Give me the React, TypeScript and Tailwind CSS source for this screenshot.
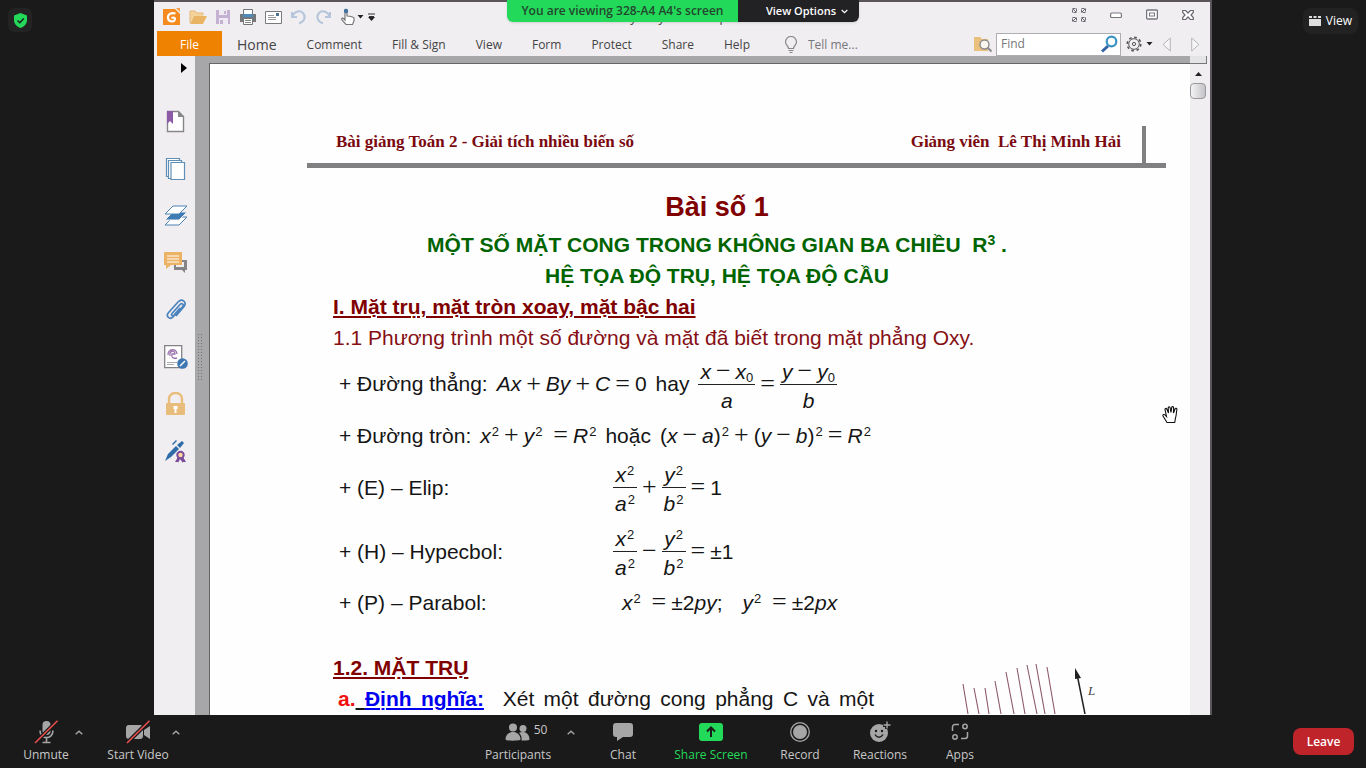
import type { ReactNode } from "react";

function Sup({ children }: { children: ReactNode }) {
  return <sup className="pl-px text-[13px] not-italic">{children}</sup>;
}

function Sub({ children }: { children: ReactNode }) {
  return <sub className="text-[13px] not-italic">{children}</sub>;
}

function Op({ children }: { children: ReactNode }) {
  return <span className="px-[5px] font-['Liberation_Serif',serif] text-[26px] leading-6 not-italic">{children}</span>;
}

function Num({ children }: { children: ReactNode }) {
  return <span className="not-italic">{children}</span>;
}

function Frac({ top, bottom }: { top: ReactNode; bottom: ReactNode }) {
  return (
    <span className="inline-flex flex-col items-stretch text-center leading-6">
      <span className="border-b border-[#222] px-[2px] pt-1">{top}</span>
      <span className="px-[2px] pt-1">{bottom}</span>
    </span>
  );
}

function Formula({ children, className = "" }: { children: ReactNode; className?: string }) {
  return <span className={`flex items-center whitespace-pre italic ${className}`}>{children}</span>;
}

function Caret({ className = "" }: { className?: string }) {
  return (
    <svg className={className} width="7" height="4" viewBox="0 0 7 4">
      <path d="M.5 0h6L3.500 3.500z" fill="#222" />
    </svg>
  );
}

function QuickAccess() {
  return (
    <div className="flex items-center gap-2 pl-[9px]">
      <button aria-label="Foxit Reader">
        <svg width="18" height="18" viewBox="0 0 18 18">
          <path d="M0 1h12l5 5v11H0z" fill="#f58a1f" />
          <path d="M13 0h4v4z" fill="#f5a04a" />
          <path d="M12.500 5.500C8 4 4.500 6.500 5 10c.5 4 6 4.500 7 1.500.3-1.500-1-2.500-3.500-1.500" fill="none" stroke="#fff" strokeWidth="2.200" />
        </svg>
      </button>
      <button aria-label="Open">
        <svg width="18" height="18" viewBox="0 0 18 18">
          <path d="M1 15V3h5l2 2h6v3H5z" fill="#f3d39b" />
          <path d="M1 16 5 8h13l-4 8z" fill="#e9b565" />
          <path d="M1 15V3h5l2 2h6v2" fill="none" stroke="#e5b878" />
        </svg>
      </button>
      <button aria-label="Save">
        <svg width="16" height="18" viewBox="0 0 16 18">
          <path d="M1 2h14v14H1z" fill="#c5b2d2" />
          <path d="M4 2h8v5H4zM4 10h9v6H4z" fill="#f0eaf4" />
          <path d="M9 3h2v3H9zM5 12h3v4H5z" fill="#c5b2d2" />
        </svg>
      </button>
      <button aria-label="Print">
        <svg width="18" height="18" viewBox="0 0 18 18">
          <path d="M1 6h16v8H1z" fill="#747679" />
          <path d="M4.500 1.500h9v6h-9zM4.500 10.500h9v6h-9z" fill="#fff" stroke="#747679" />
          <path d="M4 6h10v3H4z" fill="#4f8abd" />
          <path d="M6 12.500h6M6 14.500h6" stroke="#888" />
        </svg>
      </button>
      <button aria-label="Email">
        <svg width="17" height="18" viewBox="0 0 17 18">
          <path d="M.5 3.500h16v12H.5z" fill="#fff" stroke="#77797c" />
          <path d="M3 7.500h6M3 9.500h8M3 11.500h8" stroke="#999" />
          <path d="M11 5h3v3h-3z" fill="#4f718e" />
        </svg>
      </button>
      <button aria-label="Undo">
        <svg width="17" height="18" viewBox="0 0 17 18" fill="none" stroke="#b5c5db" strokeWidth="2">
          <path d="M2 4v5h5M2.500 8C5 3 10 2 13 5c3.500 4 1 9-4 10.500" />
        </svg>
      </button>
      <button aria-label="Redo">
        <svg width="17" height="18" viewBox="0 0 17 18" fill="none" stroke="#b5c5db" strokeWidth="2">
          <path d="M15 4v5h-5M14.500 8C12 3 7 2 4 5c-3.500 4-1 9 4 10.500" />
        </svg>
      </button>
      <button aria-label="Hand tool" className="flex items-center gap-px">
        <svg width="16" height="18" viewBox="0 0 16 18">
          <path d="M5 10V2.500c0-1.500 2-1.500 2 0V8c3 .3 6 .7 7 2v3l-1.500 3.500H6L2 12c-1-1.500.5-2.500 1.500-1.500L5 12z" fill="#fff" stroke="#777" strokeWidth="1.200" />
          <circle cx="6" cy="3" r="2.200" fill="#42729e" />
        </svg>
        <Caret />
      </button>
      <button aria-label="Customize toolbar" className="-ml-1">
        <svg width="7" height="8" viewBox="0 0 7 8">
          <path d="M0 1h7M1 3.500h5" stroke="#333" />
          <path d="M0 4h7L3.500 8z" fill="#222" />
        </svg>
      </button>
    </div>
  );
}

function WindowControls() {
  return (
    <div className="flex items-center gap-6 pr-4 pb-1 text-[#6c6c74]">
      <button aria-label="Full screen">
        <svg width="14" height="14" viewBox="0 0 14 14" fill="none" stroke="#696971">
          <path d="M.5.500h4v4h-4zM9.500.500h4v4h-4zM.5 9.500h4v4h-4zM9.500 9.500h4v4h-4z" strokeDasharray="3 1" />
          <path d="m1 1 3 3M13 1l-3 3M1 13l3-3m9 3-3-3" />
        </svg>
      </button>
      <button aria-label="Minimize">
        <svg width="12" height="14" viewBox="0 0 12 14">
          <rect x=".6" y="5" width="10.800" height="4.500" rx="1" fill="#fff" stroke="#777780" strokeWidth="1.200" />
        </svg>
      </button>
      <button aria-label="Maximize">
        <svg width="12" height="14" viewBox="0 0 12 14">
          <rect x=".6" y="2" width="10.800" height="9" rx="1" fill="#fff" stroke="#777780" strokeWidth="1.300" />
          <rect x="3.500" y="5" width="5" height="3" fill="#fff" stroke="#777780" />
        </svg>
      </button>
      <button aria-label="Close">
        <svg width="12" height="14" viewBox="0 0 12 14">
          <path d="M.7 2.500h3L6 5l2.300-2.500h3v2L9 7l2.300 2.500v2h-3L6 9l-2.300 2.500h-3v-2L3 7 .7 4.500z" fill="#fff" stroke="#686870" strokeWidth="1.200" />
        </svg>
      </button>
    </div>
  );
}

const tabs = ["Comment", "Fill & Sign", "View", "Form", "Protect", "Share", "Help"];

function MenuBar() {
  return (
    <div className="flex h-[25px] items-stretch pl-[3px] text-xs text-[#444]">
      <button className="w-[65px] bg-[#ef8200] pt-[2px] text-white">File</button>
      <nav className="flex items-center gap-[30px] pt-[3px] pl-[15px]">
        <a href="#home" className="text-sm">Home</a>
        {tabs.map((tab) => (
          <a key={tab} href={`#${tab}`} className="whitespace-nowrap">
            {tab}
          </a>
        ))}
      </nav>
      <label className="flex items-center gap-[10px] pt-[3px] pl-[34px]">
        <svg width="14" height="18" viewBox="0 0 14 18" fill="none" stroke="#85858a" strokeWidth="1.200">
          <path d="M4.500 12.500C4.500 10 1.500 9 1.500 6a5.500 5.500 0 0 1 11 0c0 3-3 4-3 6.500zM4.500 14.500h5M5.500 16.500h3" />
        </svg>
        <input aria-label="Tell me" placeholder="Tell me..." className="w-20 bg-transparent text-xs outline-none placeholder:text-[#77777b]" />
      </label>
      <div className="ml-auto flex items-center pt-px pr-[10px]">
        <button aria-label="Search folder">
          <svg width="19" height="18" viewBox="0 0 19 18">
            <path d="M1 2h6l2 2h6v12H1z" fill="#eac07f" />
            <circle cx="11.500" cy="9.500" r="4.500" fill="#fbf6ee" stroke="#8b8b90" strokeWidth="1.400" />
            <path d="m14.500 12.500 4 4" stroke="#8b8b90" strokeWidth="2" />
          </svg>
        </button>
        <div className="ml-1 flex h-[23px] w-[125px] items-center border border-[#adadb2] bg-white pr-[2px] pl-1">
          <input aria-label="Find" placeholder="Find" className="min-w-0 flex-1 text-xs outline-none placeholder:text-[#777]" />
          <svg width="17" height="18" viewBox="0 0 17 18" fill="none">
            <path d="M7 11 1 16.500" stroke="#3464a4" strokeWidth="3" />
            <circle cx="10.500" cy="6.500" r="4.800" stroke="#3a93c4" strokeWidth="2.200" />
          </svg>
        </div>
        <button aria-label="Search settings" className="ml-[5px] flex items-center gap-1">
          <svg width="16" height="16" viewBox="0 0 16 16" fill="none" stroke="#555">
            <circle cx="8" cy="8" r="5.300" />
            <circle cx="8" cy="8" r="6.800" strokeDasharray="2.700 2.640" strokeWidth="1.600" />
            <circle cx="8" cy="8" r="1.600" />
          </svg>
          <Caret />
        </button>
        <button aria-label="Previous" className="ml-[9px]">
          <svg width="9" height="15" viewBox="0 0 9 15" fill="#f5f5f7" stroke="#b5b5ba"><path d="M8.300 1v13L1 7.500z" /></svg>
        </button>
        <button aria-label="Next" className="ml-5">
          <svg width="9" height="15" viewBox="0 0 9 15" fill="#f5f5f7" stroke="#b5b5ba"><path d="M.7 1v13L8 7.500z" /></svg>
        </button>
      </div>
    </div>
  );
}

const panels: { name: string; icon: ReactNode }[] = [
  {
    name: "Bookmarks",
    icon: (
      <>
        <path d="M3.500 1.500h11l5 5v15h-16z" fill="#fff" stroke="#87878b" strokeWidth="1.400" />
        <path d="M14 1v6h6z" fill="#87878b" />
        <path d="M3 1h6v13l-3-3-3 3z" fill="#8d5ba6" />
      </>
    ),
  },
  {
    name: "Pages",
    icon: (
      <g fill="#fff" stroke="#5f8fb5" strokeWidth="1.200">
        <path d="M2.500 1.500h13v18h-13z" />
        <path d="M4.500 3.500h13v18h-13z" />
        <path d="M7 5.500h13.500v17H7z" />
      </g>
    ),
  },
  {
    name: "Layers",
    icon: (
      <>
        <path d="M9 13h14l-8 8H1z" fill="#fff" stroke="#4b83b3" />
        <path d="M9 8h14l-8 8H1z" fill="#3f7bb3" stroke="#f0eef1" />
        <path d="M9 2h14l-8 8H1z" fill="#fff" stroke="#4b83b3" />
      </>
    ),
  },
  {
    name: "Comments",
    icon: (
      <>
        <path d="M10 9h13v10h-2v3l-3-3h-8z" fill="#858588" />
        <path d="M12 11h8v5h-8z" fill="#f0eef1" />
        <path d="M0 1h18v13H7l-5 4v-4H0z" fill="#edb364" />
        <path d="M3 5h12M3 8h12M3 11h12" stroke="#fff" />
      </>
    ),
  },
  {
    name: "Attachments",
    icon: (
      <path d="M8 15.500 16 6.500c2-2 4.500 0 2.500 2.300L9 19c-3 3-7.500-.5-4.800-4L14 4c4-4 9.500 0 6 4.500L12 18M8 15.500c-1.500 2 .5 3 2 1.500l6-7" fill="none" stroke="#4b83bd" strokeWidth="1.700" />
    ),
  },
  {
    name: "Digital signatures",
    icon: (
      <>
        <path d="M.7.700h17v22H.7z" fill="#fff" stroke="#838387" strokeWidth="1.300" />
        <path d="M4 10c0-7 9-7 9-1M6 11c-1-6 5-6 5-2H8c-1 3 1 5 5 4" fill="none" stroke="#9a72ad" strokeWidth="1.300" />
        <path d="M3 17.500h10M3 19.500h7" stroke="#aaa" />
        <circle cx="18.500" cy="18.500" r="5.300" fill="#3d76b1" />
        <path d="m16 21 5-5" stroke="#fff" strokeWidth="1.500" />
      </>
    ),
  },
  {
    name: "Security",
    icon: (
      <>
        <path d="M5 12V7c0-8 13-8 13 0v5" fill="none" stroke="#e8bd7c" strokeWidth="2.400" />
        <rect x="2" y="11" width="19" height="12" rx="1" fill="#e8bd7c" />
        <path d="M9.500 14h4v3h-1v4h-2v-4h-1z" fill="#fff" />
      </>
    ),
  },
  {
    name: "Sign",
    icon: (
      <>
        <path d="m1 22 3-7 8-8 3 3-8 8z" fill="#2e6ca8" />
        <path d="m13 6 5-4 2 2-4 5zM8 5l4-4 1 1-4 4z" fill="#2e6ca8" />
        <path d="m14 18-3 5h3v1l2-4 3 4v-1h3l-3-5z" fill="#7a4b99" />
        <circle cx="16.500" cy="16" r="3.200" fill="#ffd7a0" stroke="#7a4b99" strokeWidth="2" />
      </>
    ),
  },
];

function SidePanel() {
  return (
    <aside className="flex w-[41px] shrink-0 flex-col bg-[#f0eef1]">
      <button aria-label="Expand panel" className="flex h-[42px] items-start pt-[7px] pl-[27px]">
        <svg width="6" height="10" viewBox="0 0 6 10"><path d="M0 0v10l6-5z" fill="#000" /></svg>
      </button>
      {panels.map((p) => (
        <button key={p.name} aria-label={p.name} className="flex h-[47px] items-center pl-[10px]">
          <svg width="24" height="24" viewBox="0 0 24 24">{p.icon}</svg>
        </button>
      ))}
    </aside>
  );
}

function HandCursor() {
  return (
    <svg className="absolute top-[342px] right-[10px]" width="18" height="18" viewBox="0 0 18 18">
      <path d="M5 16.500 1 10c-.5-1.500 1.200-2 2-1l1.500 1.500-1.500-7c0-1.500 1.800-1.500 2 0L6.500 7 6.200 2c0-1.500 1.900-1.500 2 0L9 6.500l.7-5c.2-1.300 2-1.200 1.900.2L11.500 7l1.500-4c.5-1.300 2.100-.6 1.900.5-.7 3-.4 6-1.400 8.500l-.8 4.500z" fill="#fff" stroke="#111" strokeWidth="1.100" />
    </svg>
  );
}

function CylinderSketch() {
  return (
    <svg className="ml-[86px] shrink-0" width="136" height="62" viewBox="0 0 136 62">
      <path
        d="m3 32 5 30M14 36l5 26M25 36l4 26M35 29l6 33M46 20l8 42M57 16l8 46M67 13l10 49M76 12l9 50M87 15l8 47"
        stroke="#8d5a6c"
        strokeWidth="1.100"
      />
      <path d="m117 22 8 40" stroke="#222" strokeWidth="1.500" />
      <path d="m115 16 6 10-6 1z" fill="#222" />
      <text x="128" y="43" fontFamily="Liberation Serif" fontSize="13" fontStyle="italic" fill="#444">L</text>
    </svg>
  );
}

function DocumentPage() {
  return (
    <article className="relative min-w-0 flex-1 overflow-hidden border-t border-l border-[#666] bg-[#fefefe] font-['Liberation_Sans',Arial,sans-serif] text-[21px] leading-[31px] text-[#151515]">
      <header className="mr-6 ml-[97px] flex justify-between border-b-[5px] border-[#808083] pt-[62px] pl-[29px] font-['Liberation_Serif',serif] text-[17px] leading-8 font-bold text-[#7b0a10]">
        <span>Bài giảng Toán 2 - Giải tích nhiều biến số</span>
        <span className="mr-5 flex h-[37px] border-r-4 border-[#808083] pr-[21px] whitespace-pre">Giảng viên  Lê Thị Minh Hải</span>
      </header>
      <div className="pr-[89px] pl-[123px]">
        <h1 className="mt-[23px] mb-[6px] text-center text-[27px] leading-8 font-bold text-[#800000]">Bài số 1</h1>
        <h2 className="text-center font-bold whitespace-pre text-[#006400]">
          MỘT SỐ MẶT CONG TRONG KHÔNG GIAN BA CHIỀU  R<sup className="text-[14px]">3</sup> .
        </h2>
        <h2 className="text-center font-bold text-[#006400]">HỆ TỌA ĐỘ TRỤ, HỆ TỌA ĐỘ CẦU</h2>
        <h3 className="font-bold text-[#800000] underline decoration-2 underline-offset-2">I. Mặt trụ, mặt tròn xoay, mặt bậc hai</h3>
        <h4 className="text-[#860f14]">1.1 Phương trình một số đường và mặt đã biết trong mặt phẳng Oxy.</h4>
        <div className="pl-[6px]">
          <div className="flex h-[61px] items-center gap-[9px]">
            <span>+ Đường thẳng:</span>
            <Formula>
              Ax<Op>+</Op>By<Op>+</Op>C<Op>=</Op><Num>0</Num>
            </Formula>
            <span>hay</span>
            <Formula>
              <Frac top={<>x<Op>−</Op>x<Sub>0</Sub></>} bottom="a" />
              <Op>=</Op>
              <Frac top={<>y<Op>−</Op>y<Sub>0</Sub></>} bottom="b" />
            </Formula>
          </div>
          <div className="flex h-[42px] items-center gap-[9px]">
            <span>+ Đường tròn:</span>
            <Formula>
              <span>x<Sup>2</Sup><Op>+</Op>y<Sup>2</Sup> <Op>=</Op>R<Sup>2</Sup></span>
            </Formula>
            <span>hoặc</span>
            <Formula>
              <span><Num>(</Num>x<Op>−</Op>a<Num>)</Num><Sup>2</Sup><Op>+</Op><Num>(</Num>y<Op>−</Op>b<Num>)</Num><Sup>2</Sup><Op>=</Op>R<Sup>2</Sup></span>
            </Formula>
          </div>
          <div className="flex h-[62px] items-center">
            <span className="w-[274px]">+ (E) – Elip:</span>
            <Formula>
              <Frac top={<>x<Sup>2</Sup></>} bottom={<>a<Sup>2</Sup></>} />
              <Op>+</Op>
              <Frac top={<>y<Sup>2</Sup></>} bottom={<>b<Sup>2</Sup></>} />
              <Op>=</Op><Num>1</Num>
            </Formula>
          </div>
          <div className="flex h-[66px] items-center">
            <span className="w-[274px]">+ (H) – Hypecbol:</span>
            <Formula>
              <Frac top={<>x<Sup>2</Sup></>} bottom={<>a<Sup>2</Sup></>} />
              <Op>−</Op>
              <Frac top={<>y<Sup>2</Sup></>} bottom={<>b<Sup>2</Sup></>} />
              <Op>=</Op><Num>±1</Num>
            </Formula>
          </div>
          <div className="flex h-9 items-center">
            <span className="w-[283px]">+ (P) – Parabol:</span>
            <Formula className="gap-5">
              <span>x<Sup>2</Sup> <Op>=</Op><Num>±2</Num>py<Num>;</Num></span>
              <span>y<Sup>2</Sup> <Op>=</Op><Num>±2</Num>px</span>
            </Formula>
          </div>
        </div>
        <section className="mt-8 flex items-start">
          <div className="w-[541px] shrink-0">
            <h3 className="font-bold text-[#800000] underline decoration-2 underline-offset-2">1.2. MẶT TRỤ</h3>
            <p className="pl-[5px] [text-align-last:justify]">
              <b className="text-[#f01010]">a.</b>
              <span className="underline decoration-2 underline-offset-2"> </span>
              <b className="text-[#0000f0] underline decoration-2 underline-offset-2">Định nghĩa:</b>
              {"\u00a0 "}Xét một đường cong phẳng C và một
            </p>
          </div>
          <CylinderSketch />
        </section>
      </div>
      <HandCursor />
    </article>
  );
}

function ScrollBar() {
  return (
    <div className="flex w-5 shrink-0 flex-col bg-[#f0eef1]">
      <div className="h-2 w-[17px] border-r border-b border-[#777] bg-[#e4e4e6]" />
      <button aria-label="Scroll up" className="flex h-[19px] w-[17px] items-center justify-center">
        <svg width="7" height="4" viewBox="0 0 7 4"><path d="M0 4h7L3.500 0z" fill="#222" /></svg>
      </button>
      <div className="h-4 w-4 rounded-sm border border-[#98989c] bg-linear-to-r from-[#f3f3f5] to-[#c4c4c8]" />
    </div>
  );
}

function ReaderWindow() {
  return (
    <section className="flex min-w-0 flex-col overflow-hidden border-t-2 border-r-2 border-[#5b5459] bg-[#f0eef1]">
      <div className="relative flex h-[29px] shrink-0 items-center justify-between pt-px">
        <QuickAccess />
        <span className="absolute top-2 left-[470px] text-xs text-[#444]">Ly thuyet Toan 2.pdf - Foxit Reader</span>
        <WindowControls />
      </div>
      <MenuBar />
      <div className="flex min-h-0 flex-1">
        <SidePanel />
        <div className="flex min-w-0 flex-1 flex-row bg-[#a7a7aa] pt-[7px]">
          <div className="flex w-[14px] shrink-0 items-start pt-[271px] pl-[3px]">
            <svg width="4" height="47" viewBox="0 0 4 47">
              <path d="M.5 0v47M3.500 0v47" stroke="#737377" strokeDasharray="1 2" />
            </svg>
          </div>
          <DocumentPage />
        </div>
        <ScrollBar />
      </div>
    </section>
  );
}

function ShareBanner() {
  return (
    <div className="absolute top-0 left-1/2 flex h-[22px] -translate-x-1/2 overflow-hidden rounded-b-md font-semibold whitespace-nowrap shadow">
      <div className="flex w-[231px] items-center justify-center bg-[#23d959] text-xs text-[#24452f]">You are viewing 328-A4 A4's screen</div>
      <button className="flex w-[121px] items-center justify-end gap-[5px] bg-[#222224] pr-[11px] text-[11px] text-white">
        View Options
        <svg width="7" height="5" viewBox="0 0 7 5" fill="none" stroke="#fff" strokeWidth="1.200"><path d="m.7 1 2.800 2.700L6.300 1" /></svg>
      </button>
    </div>
  );
}

function Tool({ label, width, icon, tone = "text-[#c8c8c8]" }: { label: string; width: string; icon: ReactNode; tone?: string }) {
  return (
    <button className={`flex flex-col items-center gap-[3px] whitespace-nowrap ${width} ${tone}`}>
      <span className="flex h-6 items-center justify-center">{icon}</span>
      <span className="text-xs leading-4">{label}</span>
    </button>
  );
}

function More({ label, width }: { label: string; width: string }) {
  return (
    <button aria-label={label} className={`flex h-6 items-center justify-center ${width}`}>
      <svg width="8" height="5" viewBox="0 0 8 5" fill="none" stroke="#a6a6a6" strokeWidth="1.400"><path d="m.7 4.300 3.300-3 3.300 3" /></svg>
    </button>
  );
}

function MeetingBar() {
  return (
    <footer className="grid h-[53px] shrink-0 grid-cols-[1fr_auto_1fr] bg-[#1a1a1a] pt-[5px]">
      <div className="flex items-start pl-5">
        <Tool
          label="Unmute"
          width="w-[52px]"
          icon={
            <svg width="24" height="24" viewBox="0 0 24 24">
              <rect x="8.500" y="1" width="8" height="14" rx="4" fill="#a6a6a6" />
              <path d="M6 10.500c0 9.500 13 9.500 13 0M12.500 18v4M8.500 22.500h8" fill="none" stroke="#a6a6a6" strokeWidth="1.600" />
              <path d="M1 23 23.500.800" stroke="#1a1a1a" strokeWidth="4" />
              <path d="M1 23 23.500.800" stroke="#f0504f" strokeWidth="1.500" />
            </svg>
          }
        />
        <More label="Audio options" width="w-[14px]" />
        <Tool
          label="Start Video"
          width="ml-5 w-16"
          icon={
            <svg width="26" height="24" viewBox="0 0 26 24">
              <rect x="1" y="5" width="17" height="14" rx="3" fill="#a6a6a6" />
              <path d="m19 10 6-4v13l-6-4z" fill="#a6a6a6" />
              <path d="M2 23 24.500.800" stroke="#1a1a1a" strokeWidth="4" />
              <path d="M2 23 24.500.800" stroke="#f0504f" strokeWidth="1.500" />
            </svg>
          }
        />
        <More label="Video options" width="w-3" />
      </div>
      <div className="flex items-start pl-28">
        <Tool
          label="Participants"
          width="w-20"
          icon={
            <span className="flex items-center gap-1 pl-4">
              <svg width="25" height="24" viewBox="0 0 25 24" fill="#a6a6a6">
                <circle cx="8" cy="7.500" r="4" />
                <path d="M.5 19.500c0-10 15-10 15 0 0 1.500-15 1.500-15 0z" />
                <circle cx="18" cy="8.500" r="3.500" />
                <path d="M14 12.800c5-2.300 10.500.2 10.500 6.700 0 1-4 1.200-8 1 .5-3-.3-5.500-2.500-7.700z" />
              </svg>
              <span className="self-start text-xs leading-5">50</span>
            </span>
          }
        />
        <More label="Participant options" width="w-[26px]" />
        <Tool
          label="Chat"
          width="w-[78px]"
          icon={
            <svg width="22" height="20" viewBox="0 0 22 20"><path d="M4 1h14a3 3 0 0 1 3 3v8a3 3 0 0 1-3 3h-7l-6 4v-4H4a3 3 0 0 1-3-3V4a3 3 0 0 1 3-3z" fill="#a6a6a6" /></svg>
          }
        />
        <Tool
          label="Share Screen"
          width="w-[98px]"
          tone="text-[#23d959]"
          icon={
            <svg width="24" height="18" viewBox="0 0 24 18">
              <rect width="24" height="18" rx="3" fill="#23d959" />
              <path d="M12 14V5M8 8.500l4-4 4 4" fill="none" stroke="#1a1a1a" strokeWidth="2" />
            </svg>
          }
        />
        <Tool
          label="Record"
          width="w-20"
          icon={
            <svg width="20" height="20" viewBox="0 0 20 20">
              <circle cx="10" cy="10" r="9.300" fill="none" stroke="#a6a6a6" strokeWidth="1.300" />
              <circle cx="10" cy="10" r="7" fill="#a6a6a6" />
            </svg>
          }
        />
        <Tool
          label="Reactions"
          width="w-20"
          icon={
            <svg width="22" height="24" viewBox="0 0 22 24">
              <circle cx="10" cy="13" r="9" fill="#a6a6a6" />
              <path d="M18 1v8M14 5h8" stroke="#1a1a1a" strokeWidth="4" />
              <path d="M18 1.500v7M14.500 5h7" stroke="#a6a6a6" strokeWidth="1.400" />
              <circle cx="7" cy="11" r="1.200" fill="#1a1a1a" />
              <circle cx="13" cy="11" r="1.200" fill="#1a1a1a" />
              <path d="M6 14.500c2 3.500 6 3.500 8 0" fill="none" stroke="#1a1a1a" strokeWidth="1.500" />
            </svg>
          }
        />
        <Tool
          label="Apps"
          width="w-20"
          icon={
            <svg width="18" height="20" viewBox="0 0 18 20" fill="none" stroke="#a6a6a6" strokeWidth="1.500">
              <path d="M1.500 9V5a2.500 2.500 0 0 1 2.500-2.500h4M16.500 10v4a2.500 2.500 0 0 1-2.500 2.500h-4" />
              <circle cx="14" cy="4.500" r="2.200" />
              <circle cx="4" cy="15" r="2.200" />
            </svg>
          }
        />
      </div>
      <div className="flex justify-end pt-2 pr-3">
        <button className="h-[27px] w-[61px] rounded-lg bg-[#c0242b] text-xs font-semibold text-white">Leave</button>
      </div>
    </footer>
  );
}

export default function App() {
  return (
    <div className="relative flex h-screen flex-col overflow-hidden bg-[#1a1a1a] font-['Open_Sans','Noto_Sans',sans-serif]">
      <main className="grid min-h-0 flex-1 grid-cols-[154px_minmax(0,1fr)_154px]">
        <div className="pt-2 pl-2">
          <button aria-label="Meeting information" className="flex size-6 items-center justify-center rounded-md bg-[#232323]">
            <svg width="13" height="15" viewBox="0 0 13 15">
              <path d="M6.500 0 13 2.500V7c0 4-3 6.700-6.500 8C3 13.700 0 11 0 7V2.500z" fill="#23d959" />
              <path d="m3.500 7.500 2.300 2.300L9.700 5.500" fill="none" stroke="#1a1a1a" strokeWidth="1.400" />
            </svg>
          </button>
        </div>
        <ReaderWindow />
        <div className="flex items-start justify-end pt-2 pr-2">
          <button className="flex h-[26px] items-center gap-[5px] rounded-lg bg-[#222] px-[6px] text-xs text-white">
            <svg width="12" height="12" viewBox="0 0 12 12" fill="#ddd">
              <path d="M0 4h12v7H0zM0 1h3v2H0zM4.500 1h3v2h-3zM9 1h3v2H9z" />
            </svg>
            View
          </button>
        </div>
      </main>
      <ShareBanner />
      <MeetingBar />
    </div>
  );
}
